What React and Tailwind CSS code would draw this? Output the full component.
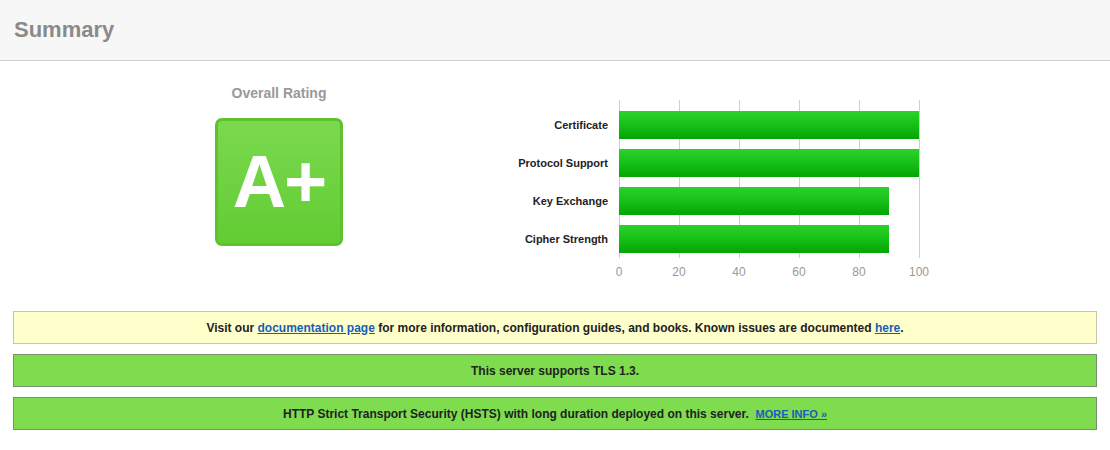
export default function App() {
  const bars = [
    ["Certificate", 300],
    ["Protocol Support", 300],
    ["Key Exchange", 270],
    ["Cipher Strength", 270],
  ];
  const ticks = [0, 20, 40, 60, 80, 100];
  return (
    <div className="w-[1110px] h-[450px] bg-white" style={{ fontFamily: '"Liberation Sans", Arial, sans-serif' }}>
      <div className="h-[61px] bg-[#f7f7f7] border-b border-[#cfcfcf] flex items-center pl-[14px]">
        <span className="text-[22px] font-bold text-[#8a8a8a] -mt-[2px]">Summary</span>
      </div>
      <div className="flex h-[250px]">
        <div className="ml-[215px] w-[128px] flex flex-col items-center pt-[22px]">
          <div className="text-[14px] font-bold text-[#999] h-[20px] leading-[20px] whitespace-nowrap">Overall Rating</div>
          <div className="mt-[15px] w-[128px] h-[128px] rounded-[7px] border-[3px] border-[#5fc12e] bg-gradient-to-b from-[#7bd94e] to-[#62cc33] flex items-center justify-center">
            <span className="text-[74px] font-bold text-white leading-none tracking-[-2px]">A+</span>
          </div>
        </div>
        <div className="ml-[136px] pt-[39px] flex">
          <div className="w-[140px] pr-[11px] pt-[11px] flex flex-col gap-[10px]">
            {bars.map(([l]) => (
              <div key={l} className="h-[28px] flex items-center justify-end text-[11px] font-bold text-[#222] whitespace-nowrap">{l}</div>
            ))}
          </div>
          <div>
            <div className="relative w-[301px] h-[158px]">
              {ticks.map((t, i) => (
                <div key={t} className="absolute top-0 bottom-0 w-px bg-[#cfcfcf]" style={{ left: i * 60 }} />
              ))}
              <div className="relative pt-[11px] flex flex-col gap-[10px]">
                {bars.map(([l, w]) => (
                  <div key={l} className="h-[28px] bg-gradient-to-b from-[#2ad32a] via-[#16c016] to-[#03a503]" style={{ width: w }} />
                ))}
              </div>
            </div>
            <div className="relative h-[24px] w-[301px]">
              {ticks.map((t, i) => (
                <span key={t} className="absolute top-[5px] text-[12px] text-[#999] -translate-x-1/2" style={{ left: i * 60 }}>{t}</span>
              ))}
            </div>
          </div>
        </div>
      </div>
      <div className="px-[13px] flex flex-col gap-[10px] text-[12px] font-bold text-[#222]">
        <div className="h-[33px] bg-[#ffffcc] border border-[#c8c6a8] flex items-center justify-center">
          <span>Visit our <a className="text-[#1a5db5] underline">documentation page</a> for more information, configuration guides, and books. Known issues are documented <a className="text-[#1a5db5] underline">here</a>.</span>
        </div>
        <div className="h-[33px] bg-[#7fdc4f] border border-[#7a8f6e] flex items-center justify-center">This server supports TLS 1.3.</div>
        <div className="h-[33px] bg-[#7fdc4f] border border-[#7a8f6e] flex items-center justify-center">
          <span>HTTP Strict Transport Security (HSTS) with long duration deployed on this server.&nbsp; <a className="text-[#1a5db5] underline text-[11px]">MORE INFO »</a></span>
        </div>
      </div>
    </div>
  );
}
